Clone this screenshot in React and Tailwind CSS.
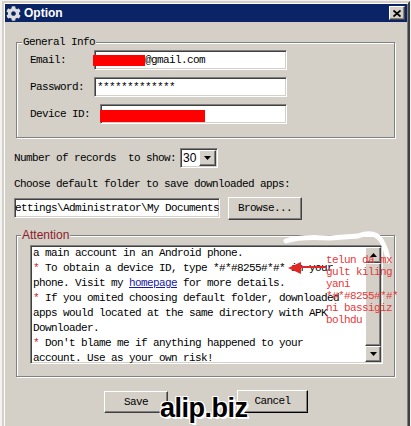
import { FaCog } from "react-icons/fa";

const mono = "font-['Liberation_Mono',monospace] text-[11px] tracking-[-0.6px] text-black";
const sunken =
    "border border-[#808080] border-b-white border-r-white shadow-[inset_1px_1px_0_#404040,inset_-1px_-1px_0_#d4d0c8]";
const raised =
    "border border-white border-b-[#404040] border-r-[#404040] shadow-[inset_-1px_-1px_0_#808080]";
const groupBox =
    "ml-[11px] w-[379px] border border-[#808080] shadow-[1px_1px_0_#fff,inset_1px_1px_0_#fff]";

const Star = () => <span className="text-[#c4202e]">*</span>;

const TriangleDown = () => (
    <svg width="7" height="4" viewBox="0 0 7 4">
        <path d="M0 0 H7 L3.5 4 Z" fill="#000" />
    </svg>
);

const TriangleUp = () => (
    <svg width="7" height="4" viewBox="0 0 7 4">
        <path d="M0 4 H7 L3.5 0 Z" fill="#000" />
    </svg>
);

const App = () => {
    return (
        <div className="relative w-[411px] h-[426px] overflow-hidden bg-[#f2f2f2] pl-[2px] pt-[1px]">
            {/* Dialog window */}
            <div className="w-[408px] h-[440px] bg-[#d4d0c8] border-2 border-[#d4d0c8] border-b-[#404040] border-r-[#404040] shadow-[inset_1px_1px_0_#fff,inset_-1px_-1px_0_#808080] p-[1px]">
                {/* Title bar */}
                <div className="h-[18px] bg-[#0b2466] flex items-center">
                    <FaCog className="ml-[1px] text-[#dcdcdc]" size={15} />
                    <span className="ml-[3px] text-white font-bold text-[12px] font-['Liberation_Sans',sans-serif] leading-none">
                        Option
                    </span>
                    <div className={`ml-auto mr-[2px] w-[16px] h-[14px] bg-[#d4d0c8] flex items-center justify-center ${raised}`}>
                        <svg width="8" height="7" viewBox="0 0 8 7">
                            <path d="M0.5 0.5 L7.5 6.5 M7.5 0.5 L0.5 6.5" stroke="#000" strokeWidth="1.8" />
                        </svg>
                    </div>
                </div>

                {/* General Info */}
                <fieldset className={`mt-[13px] ${groupBox}`}>
                    <legend className={`ml-[5px] px-[1px] leading-[14px] bg-[#d4d0c8] ${mono}`}>General Info</legend>
                    <div className="pl-[13px] pt-[1px] pb-[13px] flex flex-col gap-[7px]">
                        <div className="flex items-center h-[20px]">
                            <span className={`w-[64px] ${mono}`}>Email:</span>
                            <div className={`w-[193px] h-[20px] bg-white flex items-center ${sunken}`}>
                                <div className="-ml-[2px] w-[52px] h-[11px] bg-[#ff0000]" />
                                <span className={mono}>@gmail.com</span>
                            </div>
                        </div>
                        <div className="flex items-center h-[20px]">
                            <span className={`w-[64px] ${mono}`}>Password:</span>
                            <div className={`w-[193px] h-[20px] bg-white flex items-center pl-[2px] ${sunken}`}>
                                <span className={mono}>*************</span>
                            </div>
                        </div>
                        <div className="flex items-center h-[20px]">
                            <span className={`w-[64px] ${mono}`}>Device ID:</span>
                            <div className={`ml-[6px] w-[187px] h-[20px] bg-white flex items-start pt-[5px] ${sunken}`}>
                                <div className="-ml-[1px] w-[105px] h-[12px] bg-[#ff0000]" />
                            </div>
                        </div>
                    </div>
                </fieldset>

                {/* Records */}
                <div className="mt-[10px] ml-[9px] flex items-center h-[20px]">
                    <span className={`whitespace-pre ${mono}`}>Number of records  to show:</span>
                    <div className={`ml-[4px] w-[38px] h-[20px] bg-white flex items-center ${sunken}`}>
                        <span className="pl-[2px] text-[12px] font-['Liberation_Sans',sans-serif] text-black">30</span>
                        <div className={`ml-auto mr-[1px] w-[17px] h-[16px] bg-[#d4d0c8] flex items-center justify-center ${raised}`}>
                            <TriangleDown />
                        </div>
                    </div>
                </div>

                <div className={`mt-[9px] ml-[9px] leading-[14px] ${mono}`}>
                    Choose default folder to save downloaded apps:
                </div>

                <div className="mt-[6px] ml-[9px] flex items-start">
                    <div className={`mt-[1px] w-[206px] h-[20px] bg-white flex items-center overflow-hidden whitespace-nowrap ${sunken}`}>
                        <span className={mono}>{"ettings\\Administrator\\My Documents"}</span>
                    </div>
                    <button className={`ml-[8px] w-[74px] h-[23px] bg-[#d4d0c8] ${raised} ${mono}`}>Browse...</button>
                </div>

                {/* Attention */}
                <fieldset className={`mt-[8px] ${groupBox}`}>
                    <legend className="ml-[4px] px-[1px] leading-[14px] bg-[#d4d0c8] text-[12px] text-[#8c1c2c] font-['Liberation_Sans',sans-serif]">
                        Attention
                    </legend>
                    <div className="pl-[13px] pt-[3px] pb-[12px]">
                        <div className={`w-[353px] h-[119px] bg-white flex ${sunken}`}>
                            <div className={`flex-1 pl-[2px] leading-[15px] whitespace-pre overflow-hidden ${mono}`}>
                                <div>a main account in an Android phone.</div>
                                <div><Star /> To obtain a device ID, type *#*#8255#*#* in your</div>
                                <div>
                                    phone. Visit my <span className="text-[#1a1aa0] underline">homepage</span> for more details.
                                </div>
                                <div><Star /> If you omited choosing default folder, downloaded</div>
                                <div>apps would located at the same directory with APK</div>
                                <div>Downloader.</div>
                                <div><Star /> Don't blame me if anything happened to your</div>
                                <div>account. Use as your own risk!</div>
                            </div>
                            {/* Scrollbar */}
                            <div className="w-[16px] my-[1px] mr-[1px] flex flex-col bg-[#ebe9e6]">
                                <div className={`h-[16px] bg-[#d4d0c8] flex items-center justify-center ${raised}`}>
                                    <TriangleUp />
                                </div>
                                <div className={`flex-1 bg-[#d4d0c8] ${raised}`} />
                                <div className={`h-[16px] bg-[#d4d0c8] flex items-center justify-center ${raised}`}>
                                    <TriangleDown />
                                </div>
                            </div>
                        </div>
                    </div>
                </fieldset>

                {/* Buttons */}
                <div className="mt-[13px] flex items-end">
                    <button className={`ml-[99px] w-[64px] h-[22px] bg-[#d4d0c8] ${raised} ${mono}`}>Save</button>
                    <button className={`ml-[69px] w-[71px] h-[23px] bg-[#d4d0c8] border-b-black border-r-black ${raised} ${mono}`}>
                        Cancel
                    </button>
                </div>
            </div>

            {/* Hand-drawn annotation */}
            <svg className="absolute inset-0 pointer-events-none" width="411" height="426">
                <path
                    d="M286 241 Q300 236 330 238 L358 236 Q374 230 381 240 Q387 250 388 261"
                    fill="none"
                    stroke="#fff"
                    strokeWidth="5"
                    strokeLinecap="round"
                />
                <path d="M288 268 L301 262 L301 274 Z" fill="#e02828" />
                <path d="M300 267 H326" stroke="#e02828" strokeWidth="2" />
            </svg>
            <div
                className={`absolute left-[326px] top-[254px] leading-[12px] whitespace-pre text-[#e53a3a] font-['Liberation_Mono',monospace] text-[11px] tracking-[-0.6px]`}
            >
                <div>telun da mx</div>
                <div>gult kiling</div>
                <div>yani</div>
                <div>*#*#8255#*#*</div>
                <div>ni bassigiz</div>
                <div>bolhdu</div>
            </div>

            {/* Watermark */}
            <div className="absolute left-[160px] top-[395px] text-[27px] leading-none font-bold tracking-[-0.5px] text-black font-['Liberation_Sans',sans-serif] [text-shadow:1px_1px_0_#fff,2px_2px_0_#fff,-1px_-1px_0_#fff,1px_-1px_0_#fff,-1px_1px_0_#fff]">
                alip.biz
            </div>
        </div>
    );
};

export default App;
